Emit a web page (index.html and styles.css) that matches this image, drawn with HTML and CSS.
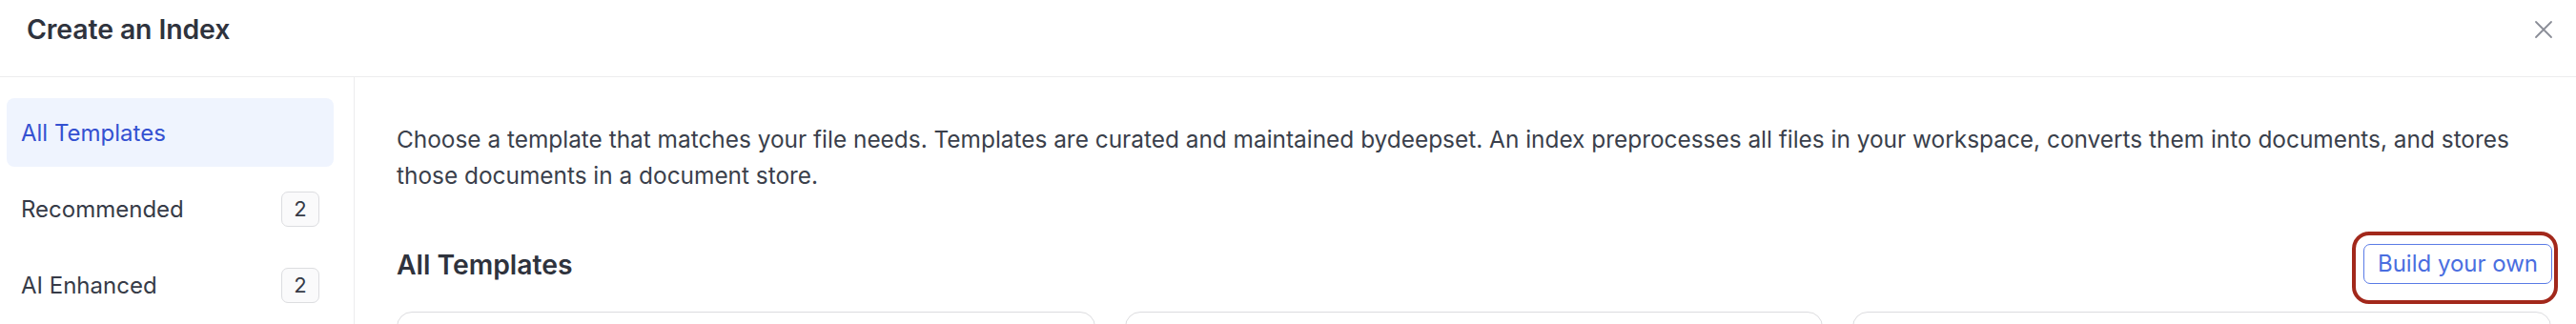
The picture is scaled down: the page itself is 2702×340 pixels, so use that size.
FILE: index.html
```html
<!DOCTYPE html>
<html lang="en">
<head>
<meta charset="utf-8">
<title>Create an Index</title>
<link rel="stylesheet" href="styles.css">
</head>
<body>
<div class="dialog">
  <header class="header">
    <h1 class="title">Create an Index</h1>
    <button class="close" aria-label="Close">
      <svg width="20" height="20" viewBox="0 0 20 20" fill="none" stroke="#8a8d97" stroke-width="1.8" stroke-linecap="round"><path d="M2 2 L18 18 M18 2 L2 18"/></svg>
    </button>
  </header>
  <div class="body">
    <nav class="sidebar">
      <div class="nav-item active"><span>All Templates</span></div>
      <div class="nav-item"><span>Recommended</span><span class="badge">2</span></div>
      <div class="nav-item"><span>AI Enhanced</span><span class="badge">2</span></div>
    </nav>
    <main class="main">
      <p class="intro">Choose a template that matches your file needs. Templates are curated and maintained bydeepset. An index preprocesses all files in your workspace, converts them into documents, and stores those documents in a document store.</p>
      <div class="row">
        <h2 class="heading">All Templates</h2>
        <div class="btn-wrap">
          <button class="btn-outline">Build your own</button>
          <span class="highlight"></span>
        </div>
      </div>
      <div class="cards">
        <div class="card"></div>
        <div class="card"></div>
        <div class="card"></div>
      </div>
    </main>
  </div>
</div>
</body>
</html>
```
FILE: styles.css
```css
html, body {
  margin: 0;
  padding: 0;
  background: #ffffff;
}
body {
  font-family: Inter, "Noto Sans", "Liberation Sans", sans-serif;
  color: #363b47;
  width: 2702px;
  height: 340px;
  overflow: hidden;
}
.dialog {
  display: flex;
  flex-direction: column;
  height: 340px;
  overflow: hidden;
}
.header {
  box-sizing: border-box;
  height: 81px;
  flex-shrink: 0;
  border-bottom: 1px solid #ececee;
  display: flex;
  justify-content: space-between;
  align-items: flex-start;
  padding: 14px 24px 0 28px;
}
.title {
  margin: 0;
  font-size: 28.4px;
  line-height: 34px;
  font-weight: 600;
  color: #2f333d;
  letter-spacing: -0.1px;
}
.close {
  border: 0;
  background: none;
  padding: 0;
  margin-top: 7px;
  width: 20px;
  height: 20px;
  display: flex;
}
.body {
  display: flex;
  flex: 1;
  min-height: 0;
  overflow: hidden;
}
.sidebar {
  width: 372px;
  box-sizing: border-box;
  border-right: 1px solid #ececee;
  padding: 22px 21px 0 7px;
  display: flex;
  flex-direction: column;
  gap: 8px;
  flex-shrink: 0;
}
.nav-item {
  height: 72px;
  flex-shrink: 0;
  box-sizing: border-box;
  display: flex;
  align-items: center;
  justify-content: space-between;
  padding: 0 15px;
  border-radius: 8px;
  font-size: 24px;
  color: #363b47;
}
.nav-item.active {
  background: #eff4fe;
  color: #3451d1;
}
.badge {
  box-sizing: border-box;
  width: 40px;
  height: 37px;
  border: 1px solid #dcdde0;
  border-radius: 7px;
  background: #fafafb;
  display: flex;
  align-items: center;
  justify-content: center;
  font-size: 22px;
  color: #363b47;
}
.main {
  flex: 1;
  min-width: 0;
  padding: 46px 26px 0 44px;
}
.intro {
  margin: 0 0 52px 0;
  font-size: 24.4px;
  line-height: 38px;
  color: #3a3f4b;
}
.row {
  display: flex;
  justify-content: space-between;
  align-items: center;
  height: 43px;
}
.heading {
  margin: 0;
  font-size: 28.3px;
  font-weight: 600;
  color: #2f333d;
  line-height: 34px;
  padding-top: 3px;
}
.btn-wrap {
  position: relative;
  margin-right: -1px;
}
.btn-outline {
  box-sizing: border-box;
  height: 42px;
  width: 198px;
  border: 1.5px solid #5a7be6;
  border-radius: 7px;
  background: #ffffff;
  color: #4a6ee0;
  font-family: Inter, "Noto Sans", "Liberation Sans", sans-serif;
  font-size: 24px;
  padding: 0;
  display: block;
}
.highlight {
  position: absolute;
  left: -12px;
  right: -6px;
  top: -13px;
  bottom: -21px;
  border: 4px solid #a2281b;
  border-radius: 18px;
  pointer-events: none;
}
.cards {
  margin-top: 29px;
  display: grid;
  grid-template-columns: repeat(3, 1fr);
  gap: 31px;
}
.card {
  height: 80px;
  border: 1.5px solid #dcdcdf;
  border-radius: 16px;
  background: #ffffff;
}
```
